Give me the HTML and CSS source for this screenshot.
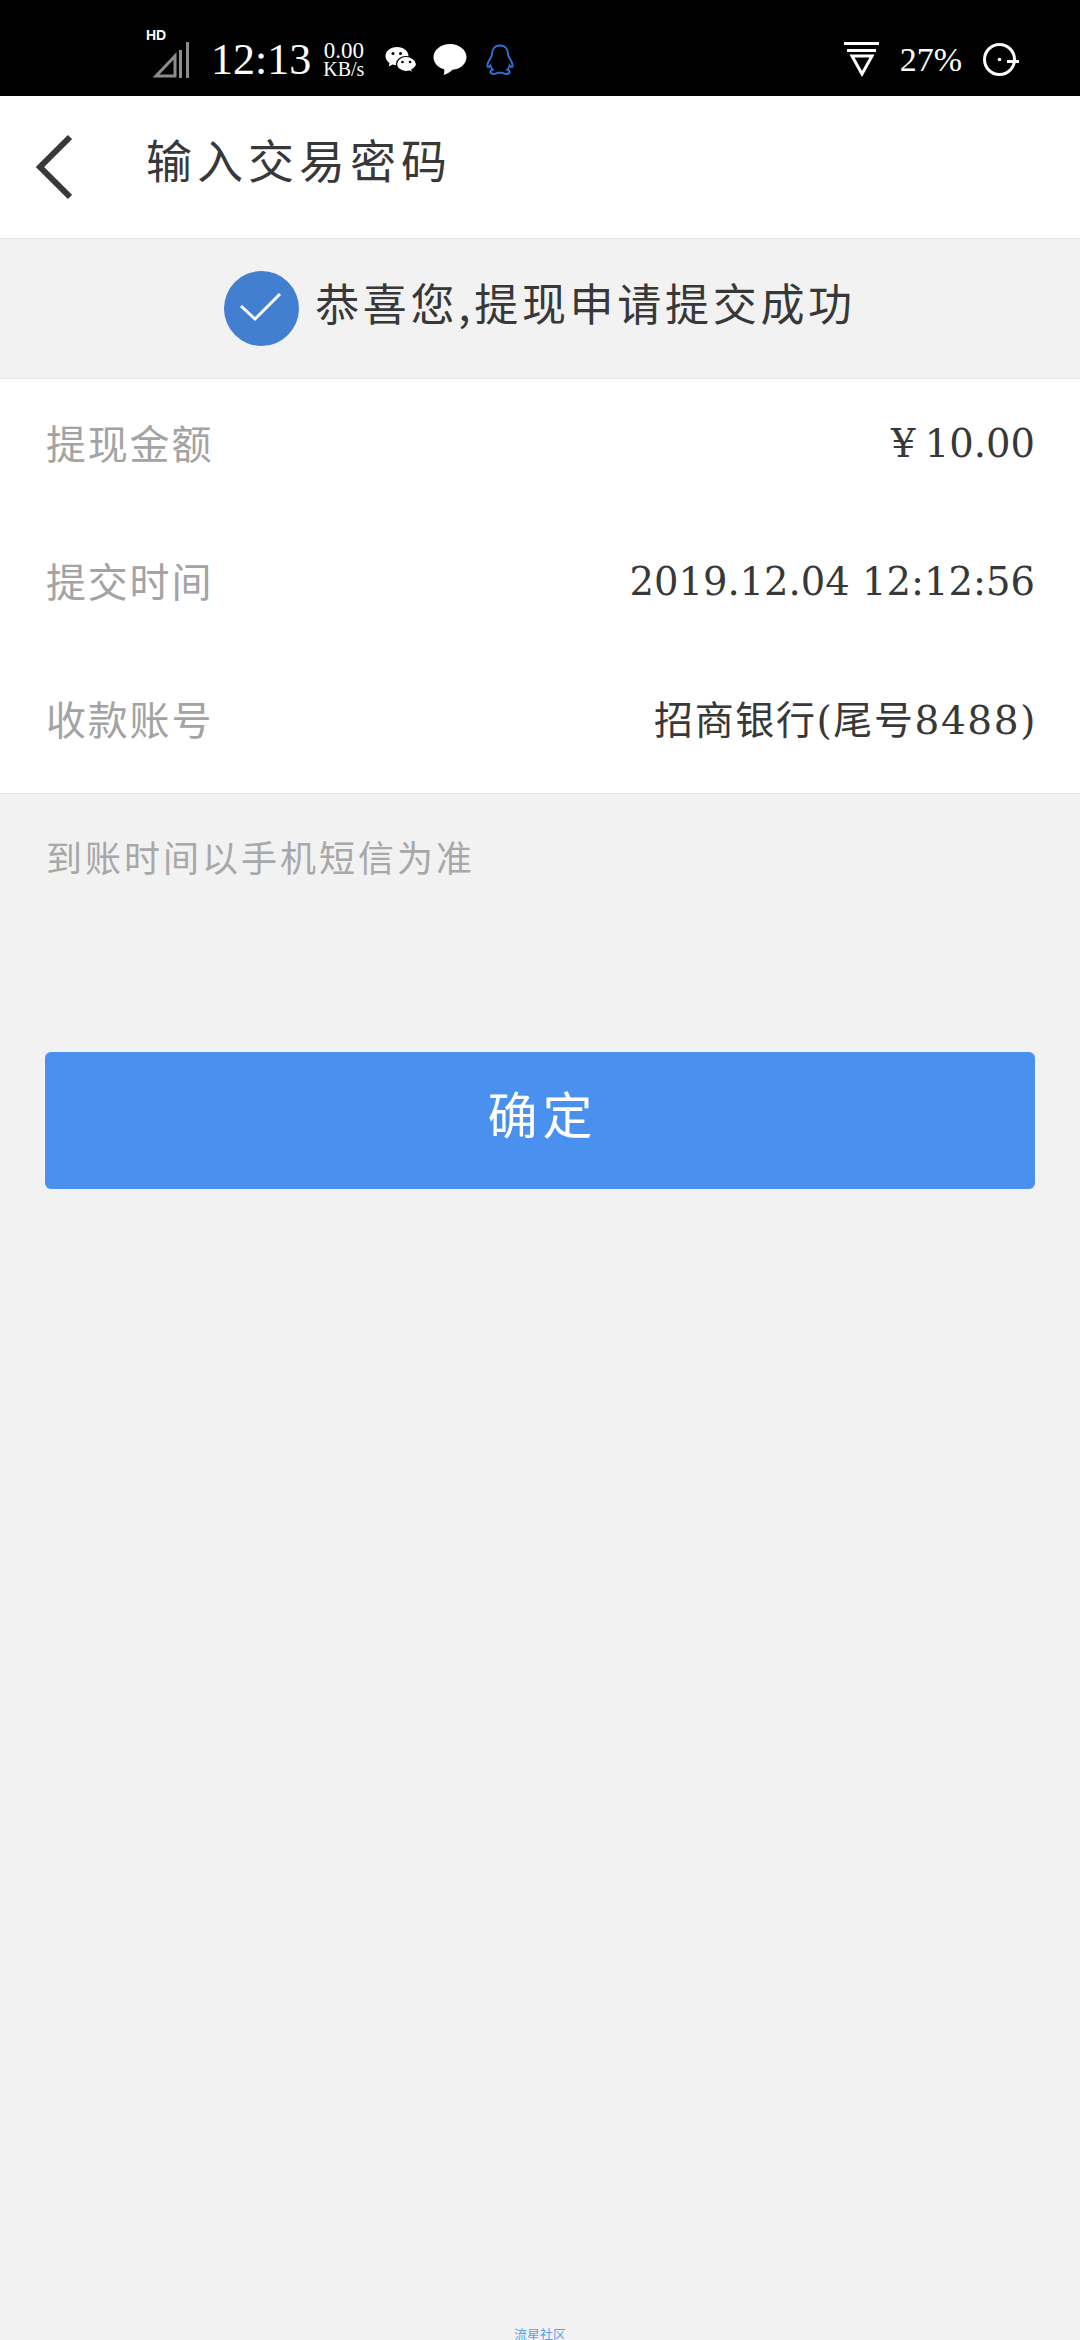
FILE: index.html
```html
<!DOCTYPE html>
<html lang="zh-CN">
<head>
  <meta charset="UTF-8" />
  <meta name="viewport" content="width=device-width, initial-scale=1.0" />
  <title>输入交易密码</title>
  <link rel="stylesheet" href="styles.css">
</head>
<body>
  <div class="status">
    <div class="status-left">
      <div class="signal">
        <span class="hd">HD</span>
        <svg width="38" height="37" viewBox="0 0 38 37">
          <path d="M3 35 L22 15 V35 Z" fill="none" stroke="#8c8c8c" stroke-width="3"/>
          <rect x="26" y="9" width="3" height="28" fill="#8c8c8c"/>
          <rect x="33" y="1" width="3" height="36" fill="#8c8c8c"/>
        </svg>
      </div>
      <span class="clock">12:13</span>
      <div class="speed"><span>0.00</span><span class="speed-unit">KB/s</span></div>
      <svg class="wechat" width="32" height="28" viewBox="0 0 32 28">
        <path d="M12 1 C5.5 1 0.5 5 0.5 10 C0.5 13 2.2 15.4 4.6 17 L3.8 20.4 L7.6 18.4 C9 18.8 10.4 19 12 19 C18.5 19 23.5 15 23.5 10 C23.5 5 18.5 1 12 1 Z" fill="#fff"/>
        <path d="M21 10.5 C15.8 10.5 11.5 13.9 11.5 18 C11.5 22.1 15.8 25.5 21 25.5 C22.2 25.5 23.2 25.3 24.3 25 L27.6 27 L26.8 23.8 C29.6 22.4 31.5 20.4 31.5 18 C31.5 13.9 26.2 10.5 21 10.5 Z" fill="#fff" stroke="#000" stroke-width="1.2"/>
        <circle cx="8" cy="7.5" r="1.5" fill="#000"/>
        <circle cx="15.5" cy="7.5" r="1.5" fill="#000"/>
        <circle cx="17.5" cy="16" r="1.3" fill="#000"/>
        <circle cx="25" cy="16" r="1.3" fill="#000"/>
      </svg>
      <svg class="bubble" width="34" height="33" viewBox="0 0 34 33">
        <path d="M17 1 C7.8 1 .5 7 .5 14 C.5 20 5 24.6 11 26.2 C11.6 28 11.4 30 10.6 32 C14.4 31 17.4 29 19.6 26.8 C27.6 26 33.5 20.8 33.5 14 C33.5 7 26.2 1 17 1 Z" fill="#fff"/>
      </svg>
      <svg class="qq" width="28" height="32" viewBox="0 0 28 32">
        <path d="M14 1.5 C8.5 1.5 6 5.5 6 10 C6 11.5 5.6 12.6 4.6 14 C3 16.4 1.4 19.4 1.4 21.8 C1.4 23.4 2.6 23.4 4.4 21.6 C4.8 23.4 5.6 24.8 6.6 25.8 C4.8 26.6 4 27.8 4.6 28.8 C5.4 30.2 9.4 30.4 11.6 28.8 H16.4 C18.6 30.4 22.6 30.2 23.4 28.8 C24 27.8 23.2 26.6 21.4 25.8 C22.4 24.8 23.2 23.4 23.6 21.6 C25.4 23.4 26.6 23.4 26.6 21.8 C26.6 19.4 25 16.4 23.4 14 C22.4 12.6 22 11.5 22 10 C22 5.5 19.5 1.5 14 1.5 Z" fill="none" stroke="#2f6fd6" stroke-width="2"/>
      </svg>
    </div>
    <div class="status-right">
      <svg width="36" height="35" viewBox="0 0 36 35">
        <rect x="0" y="0" width="35" height="3" fill="#fff"/>
        <rect x="3" y="7" width="29" height="3" fill="#fff"/>
        <path d="M8 14 H28 L18 32 Z" fill="none" stroke="#fff" stroke-width="3"/>
      </svg>
      <span class="battery">27%</span>
      <svg width="37" height="35" viewBox="0 0 37 35">
        <circle cx="16.5" cy="17.5" r="15" fill="none" stroke="#fff" stroke-width="3"/>
        <circle cx="16.5" cy="17.5" r="1.8" fill="#fff"/>
        <path d="M24 19.5 H36" stroke="#fff" stroke-width="3"/>
      </svg>
    </div>
  </div>

  <div class="nav">
    <svg class="back" width="36" height="66" viewBox="0 0 36 66">
      <path d="M34 3 L4 33 L34 63" fill="none" stroke="#383838" stroke-width="6"/>
    </svg>
    <span class="nav-title">输入交易密码</span>
  </div>

  <div class="banner">
    <svg width="75" height="75" viewBox="0 0 75 75">
      <circle cx="37.5" cy="37.5" r="37.5" fill="#437fd0"/>
      <path d="M17 35 L31 48 L56 23" fill="none" stroke="#fff" stroke-width="3"/>
    </svg>
    <span class="banner-text">恭喜您,提现申请提交成功</span>
  </div>

  <div class="list">
    <div class="row"><span class="label">提现金额</span><span class="value value-amount">¥ 10.00</span></div>
    <div class="row"><span class="label">提交时间</span><span class="value">2019.12.04 12:12:56</span></div>
    <div class="row"><span class="label">收款账号</span><span class="value value-bank">招商银行(尾号8488)</span></div>
  </div>

  <p class="note">到账时间以手机短信为准</p>

  <button class="confirm" type="button">确定</button>

  <div class="footer">流星社区</div>
</body>
</html>
```

FILE: styles.css
```css
html, body {
  height: 2340px;
  overflow: hidden;
}
body {
  margin: 0;
  display: flex;
  flex-direction: column;
  background: #f2f2f2;
  font-family: "Noto Sans CJK SC", sans-serif;
  color: #383838;
}
.status {
  height: 96px;
  flex: none;
  background: #000;
  color: #fff;
  display: flex;
  justify-content: space-between;
  align-items: center;
  padding: 23px 60px 0 153px;
  box-sizing: border-box;
  font-family: "Liberation Serif", serif;
}
.status-left, .status-right {
  display: flex;
  align-items: center;
}
.signal {
  position: relative;
  height: 37px;
}
.hd {
  position: absolute;
  left: -7px;
  top: -11px;
  font: bold 14px "Liberation Sans", sans-serif;
  line-height: 11px;
}
.clock {
  font-size: 44px;
  margin-left: 20px;
}
.speed {
  display: flex;
  flex-direction: column;
  align-items: center;
  font-size: 23px;
  line-height: 18px;
  margin-left: 12px;
}
.speed-unit {
  font-size: 20px;
}
.wechat {
  margin-left: 21px;
}
.bubble {
  margin-left: 16px;
}
.qq {
  margin-left: 19px;
}
.battery {
  font-size: 34px;
  margin: 0 21px 0 20px;
}
.nav {
  height: 143px;
  flex: none;
  background: #fff;
  border-bottom: 1px solid #e4e4e4;
  box-sizing: border-box;
  display: flex;
  align-items: center;
  padding: 0 0 0 36px;
}
.nav-title {
  font-size: 46px;
  letter-spacing: 5px;
  margin: 0 0 18px 74px;
}
.banner {
  height: 140px;
  flex: none;
  display: flex;
  justify-content: center;
  align-items: center;
  gap: 16px;
  box-sizing: border-box;
  border-bottom: 1px solid #e4e4e4;
}
.banner-text {
  font-size: 44px;
  letter-spacing: 3.7px;
  margin-bottom: 13px;
}
.list {
  background: #fff;
  border-bottom: 1px solid #e4e4e4;
  flex: none;
}
.row {
  height: 138px;
  display: flex;
  justify-content: space-between;
  align-items: center;
  padding: 0 45px 12px 46px;
  box-sizing: border-box;
}
.label {
  font-size: 40px;
  letter-spacing: 1.8px;
  color: #a3a3a3;
}
.value {
  font-family: "DejaVu Serif", "Noto Sans CJK SC", serif;
  font-size: 38.5px;
  margin-top: 3px;
}
.value-amount {
  word-spacing: -3px;
}
.value-bank {
  font-size: 39px;
  letter-spacing: 1.6px;
  margin: 0 -2px 2px 0;
}
.note {
  margin: 36px 0 0 46px;
  font-size: 36px;
  letter-spacing: 3px;
  color: #a8a8a8;
}
.confirm {
  margin: 170px 45px 0;
  height: 137px;
  flex: none;
  border: 0;
  border-radius: 6px;
  background: #4a90ee;
  color: #fff;
  font-family: inherit;
  font-size: 50px;
  letter-spacing: 5px;
  font-weight: 400;
  padding: 0 0 18px 5px;
}
.footer {
  margin-top: auto;
  text-align: center;
  font-size: 13px;
  line-height: 13px;
  color: #5aa0ee;
}
```
